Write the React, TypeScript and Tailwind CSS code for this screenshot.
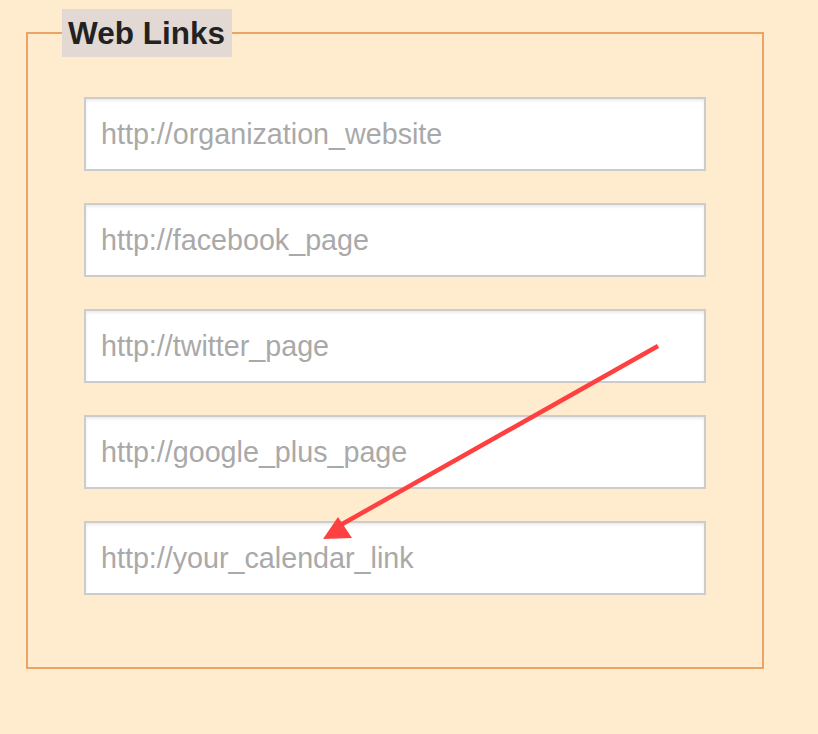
const links = [
  "http://organization_website",
  "http://facebook_page",
  "http://twitter_page",
  "http://google_plus_page",
  "http://your_calendar_link",
];

export default function App() {
  return (
    <div
      className="relative min-h-[734px] w-full bg-[#ffebcd] pt-[9px] pl-[26px]"
      style={{ fontFamily: '"Liberation Sans", Arial, Helvetica, sans-serif' }}
    >
      <fieldset className="w-[738px] border-2 border-[#eaa566] pl-[34px] pb-[72px] pt-[40px]">
        <legend className="bg-[#e3d9d4] pl-[6px] pr-[7px] py-[6px] text-[31.5px] font-bold leading-[36px] text-[#222]">
          Web Links
        </legend>
        <div className="ml-[22px] flex flex-col gap-[32px]">
          {links.map((link) => (
            <input
              key={link}
              type="text"
              placeholder={link}
              className="h-[74px] w-[622px] border-2 border-[#cccccc] bg-white px-[15px] text-[28.7px] text-[#333] shadow-[inset_0_2px_3px_rgba(0,0,0,0.08)] outline-none placeholder:text-[#a9a9a9]"
            />
          ))}
        </div>
      </fieldset>

      {/* annotation arrow */}
      <svg
        className="pointer-events-none absolute left-0 top-0"
        width="818"
        height="734"
        viewBox="0 0 818 734"
      >
        <line x1="658" y1="346" x2="337" y2="527" stroke="#ff4040" strokeWidth="4.5" />
        <polygon points="323,539 338,517 352,538" fill="#ff4040" />
      </svg>
    </div>
  );
}
